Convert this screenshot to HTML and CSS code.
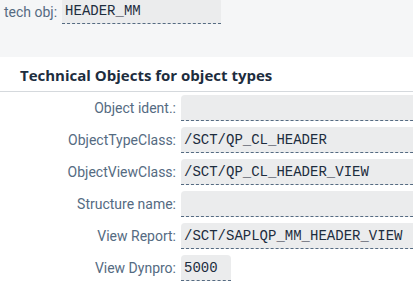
FILE: index.html
```html
<!DOCTYPE html>
<html>
<head>
<meta charset="utf-8">
<link rel="stylesheet" href="styles.css">
</head>
<body>
<div class="top">
  <span class="top-label">tech obj:</span>
  <span class="field top-field">HEADER_MM</span>
</div>
<div class="panel">
  <div class="title">Technical Objects for object types</div>
  <div class="form">
    <div class="lbl">Object ident.:</div><div class="field wide"></div>
    <div class="lbl">ObjectTypeClass:</div><div class="field wide">/SCT/QP_CL_HEADER</div>
    <div class="lbl">ObjectViewClass:</div><div class="field wide">/SCT/QP_CL_HEADER_VIEW</div>
    <div class="lbl">Structure name:</div><div class="field wide"></div>
    <div class="lbl">View Report:</div><div class="field wide">/SCT/SAPLQP_MM_HEADER_VIEW</div>
    <div class="lbl">View Dynpro:</div><div><span class="field short">5000</span></div>
  </div>
</div>
</body>
</html>
```
FILE: styles.css
```css
html, body {
  margin: 0;
  padding: 0;
  background: #ffffff;
  overflow: hidden;
}
body {
  width: 413px;
  height: 285px;
  font-family: Roboto, "Noto Sans", sans-serif;
}
.top {
  background: #f5f6f7;
  height: 57px;
  display: flex;
  align-items: flex-start;
  padding-left: 4px;
  box-sizing: border-box;
}
.top-label {
  font-size: 14px;
  color: #556b82;
  line-height: 24px;
  margin-right: 5px;
}
.field {
  display: block;
  box-sizing: border-box;
  background: #ebeced;
  border-radius: 4px 4px 0 0;
  border-bottom: 1px dashed #556b82;
  font-family: "Liberation Mono", monospace;
  font-size: 14px;
  color: #1d2d3e;
  height: 26px;
  line-height: 26px;
  padding: 0 3px;
}
.top-field {
  margin-top: -2px;
  width: 159px;
}
.panel {
  background: #ffffff;
}
.title {
  font-family: "Open Sans", sans-serif;
  font-weight: 700;
  font-size: 15px;
  color: #1d2d3e;
  padding: 8px 0 0 20px;
  height: 35px;
  box-sizing: border-box;
  border-bottom: 1px solid #d5d9dd;
}
.form {
  display: grid;
  grid-template-columns: 176px 1fr;
  column-gap: 5px;
  row-gap: 6px;
  padding-top: 3px;
}
.lbl {
  text-align: right;
  font-size: 14px;
  color: #556b82;
  line-height: 26px;
  white-space: nowrap;
}
.wide {
  margin-right: -20px;
}
.short {
  width: 50px;
}
```
